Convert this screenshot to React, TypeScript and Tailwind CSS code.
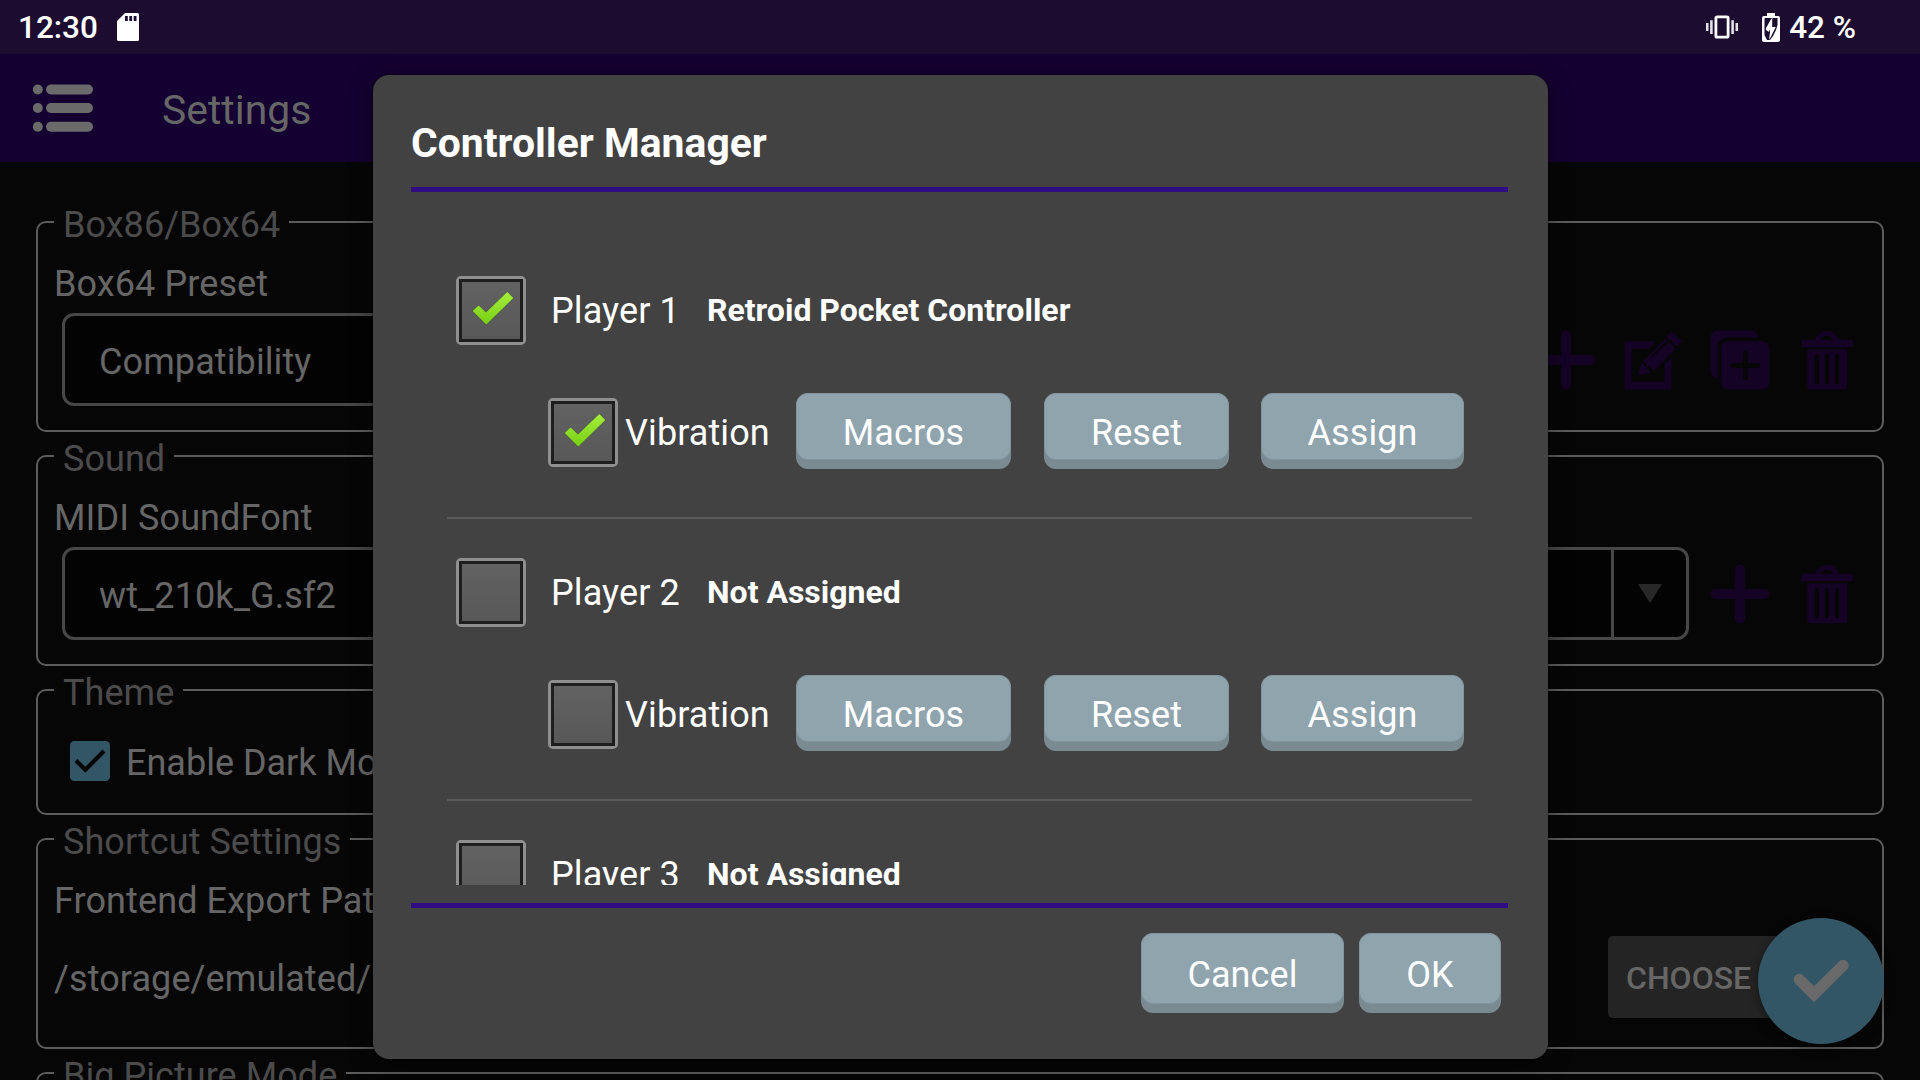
import React from "react";

const SLOT = "#060606";

function MenuIcon() {
  return (
    <svg width="60" height="48" viewBox="0 0 60 48" fill="#6a6a6a">
      {[5.5, 24, 42.8].map((y) => (
        <g key={y}>
          <circle cx="4.8" cy={y} r="5" />
          <rect x="13" y={y - 5} width="47" height="10" rx="5" />
        </g>
      ))}
    </svg>
  );
}

function SdCardIcon() {
  return (
    <svg width="22" height="28" viewBox="0 0 22 28">
      <path fill="#fff" fillRule="evenodd" d="M8 0H20.5Q22 0 22 1.5V26.5Q22 28 20.5 28H1.5Q0 28 0 26.5V8ZM8 3V8H10.8V3ZM12.3 3V8H15.1V3ZM16.7 3V8H19.5V3Z" />
    </svg>
  );
}

function VibrateIcon() {
  return (
    <svg width="32" height="24" viewBox="0 0 32 24" fill="none">
      <rect x="9.9" y="1.9" width="12.2" height="20.2" rx="1.2" stroke="#fff" strokeWidth="2.8" />
      <path d="M1.2 8V16M5.4 5.2V19M26.6 5.2V19M30.8 8V16" stroke="#fff" strokeOpacity=".88" strokeWidth="2.6" />
    </svg>
  );
}

function BatteryIcon() {
  return (
    <svg width="18" height="29" viewBox="0 0 18 29">
      <path fill="#fff" d="M5 0H13V3H16Q18 3 18 5V27Q18 29 16 29H2Q0 29 0 27V5Q0 3 2 3H5Z" />
      <path fill="#1c0c30" d="M3 5H10L8.5 7L4 15V17L7 19V25L8 27H5L2.5 22V6Z M10 5H15.5V12L14 17L11 23L8 27L7 19L10.5 5Z" />
      <path fill="#fff" d="M10.2 6L4.6 17H8V25.5L13.8 14H10.2Z" />
    </svg>
  );
}

function PlusIcon() {
  return (
    <svg width="60" height="60" viewBox="0 0 60 60" fill="#150326">
      <rect x="25" y=".5" width="10" height="59" rx="5" />
      <rect x=".5" y="25" width="59" height="10" rx="5" />
    </svg>
  );
}

function EditIcon() {
  return (
    <svg width="60" height="60" viewBox="0 0 60 60" fill="#150326">
      <path d="M32.5 11.5H1.5V59.5H48.5V27.2L41.5 34.2V51.8H8.5V18.8H25.5Z" />
      <path d="M14.8 45.2L18.8 32.2L27.8 42.6Z" />
      <path d="M20 31.6L42 8.6L52.8 18.8L30.8 41Z" />
      <path d="M48.8 1.3L59 11.3L53.8 16.7L43.3 6.8Z" />
      <path d="M28.6 26.8L44.2 11.8" stroke={SLOT} strokeWidth="1.6" />
    </svg>
  );
}

function DuplicateIcon() {
  return (
    <svg width="60" height="60" viewBox="0 0 60 60" fill="#150326">
      <path d="M7.8 48.8Q.5 47 .5 41V7.5A7 7 0 0 1 7.5 .5H41Q47 .5 48.8 7.5H17.5A9.7 9.7 0 0 0 7.8 17.2Z" />
      <rect x="11.2" y="11.2" width="48.3" height="48.3" rx="7" />
      <path d="M35.5 23V47.8M23.2 35.4H47.4" stroke={SLOT} strokeWidth="5" strokeLinecap="round" />
    </svg>
  );
}

function TrashIcon() {
  return (
    <svg width="60" height="60" viewBox="0 0 60 60" fill="#150326">
      <path d="M18.2 10.5A12 12 0 0 1 41.8 10.5H36.8A7.4 7.4 0 0 0 23.2 10.5Z" />
      <rect x="4.2" y="9.8" width="51.6" height="7.4" rx="1.5" />
      <path d="M10.2 19.5H50.2V57Q50.2 59.3 48 59.3H12.4Q10.2 59.3 10.2 57Z" />
      <path d="M19.9 26V52.2M30 26V52.2M40.1 26V52.2" stroke={SLOT} strokeWidth="4.3" strokeLinecap="round" />
    </svg>
  );
}

function Group({ title, className, children }: { title: string; className: string; children?: React.ReactNode }) {
  return (
    <section className={`relative mb-[23px] shrink-0 rounded-[10px] border-2 border-[#5c5c5c] pr-3 pl-4 ${className}`}>
      <h2 className="absolute -top-[19px] left-4 bg-[#060606] px-[9px] leading-[42px] tracking-[0.05px] text-[#4b4b4b]">{title}</h2>
      {children}
    </section>
  );
}

function SelectRow({ value, children }: { value: string; children: React.ReactNode }) {
  return (
    <div className="mt-2 ml-2 flex items-center">
      <div className="mr-[7px] flex h-[93px] grow rounded-xl border-3 border-[#474747] bg-[#030303]">
        <div className="grow pt-[25px] pl-[34px] leading-[42px]">{value}</div>
        <div className="flex w-[75px] items-center justify-center border-l-3 border-[#474747]">
          <svg width="24" height="19" viewBox="0 0 24 19" fill="#282828">
            <path d="M0 0H24L12 19Z" />
          </svg>
        </div>
      </div>
      {children}
    </div>
  );
}

function IconCell({ children }: { children: React.ReactNode }) {
  return <button className="flex w-[87px] items-center justify-center">{children}</button>;
}

function CheckBox({ checked }: { checked: boolean }) {
  return (
    <span className="flex h-[69px] w-[70px] shrink-0 rounded-[5px] border-3 border-[#8f8f8f]">
      <span className="relative grow border-3 border-[#1e1e1e] bg-linear-to-b from-[#626262] to-[#585858]">
        {checked && (
          <svg className="absolute -top-1.5 -left-1.5" width="70" height="69" viewBox="0 0 70 69">
            <defs>
              <linearGradient id="tick" x1="0" y1="0" x2="0" y2="1">
                <stop offset="0" stopColor="#a6ee3c" />
                <stop offset="1" stopColor="#76cf12" />
              </linearGradient>
            </defs>
            <path
              d="M16.7 35L22.6 29.5L30 36.6L51.3 16.1L57.3 22L30.3 48.6Z"
              fill="url(#tick)"
              stroke="#4c5a3c"
              strokeOpacity=".55"
              strokeWidth="1.5"
              strokeLinejoin="round"
              paintOrder="stroke"
            />
          </svg>
        )}
      </span>
    </span>
  );
}

function RaisedButton({ label, className }: { label: string; className: string }) {
  return (
    <button className={`flex rounded-xl bg-[#7a8a91] pb-[9px] ${className}`}>
      <span className="flex grow items-center justify-center rounded-xl border border-[#82959e] bg-[#90a4ae] pt-[13px] leading-[42px]">
        {label}
      </span>
    </button>
  );
}

function PlayerRow({ name, device, on }: { name: string; device: string; on: boolean }) {
  return (
    <li className="h-[282px] border-b-2 border-[#5b5b5b] pt-[39px]">
      <div className="flex items-center pl-[9px]">
        <CheckBox checked={on} />
        <span className="ml-[25px] w-[156px] leading-[42px]">{name}</span>
        <span className="-mt-0.5 text-[32px] leading-[38px] font-bold tracking-normal">{device}</span>
      </div>
      <div className="mt-12 flex h-[76px] items-center pl-[101px]">
        <span className="mt-[3px] flex">
          <CheckBox checked={on} />
        </span>
        <span className="mt-1 ml-[7px] w-[171px] leading-[42px]">Vibration</span>
        <RaisedButton label="Macros" className="h-[76px] w-[215px]" />
        <RaisedButton label="Reset" className="ml-[33px] h-[76px] w-[185px]" />
        <RaisedButton label="Assign" className="ml-8 h-[76px] w-[203px]" />
      </div>
    </li>
  );
}

const players = [
  { name: "Player 1", device: "Retroid Pocket Controller", on: true },
  { name: "Player 2", device: "Not Assigned", on: false },
  { name: "Player 3", device: "Not Assigned", on: false },
];

export default function App() {
  return (
    <div className="relative flex h-[1080px] w-[1920px] flex-col overflow-hidden bg-[#060606] font-['Roboto',sans-serif] text-[36px] tracking-[0.1px] text-[#666666]">
      <div className="flex h-[54px] shrink-0 items-center bg-[#1c0c30] pr-16 pl-[18px] text-[31.5px] leading-[38px] font-medium tracking-normal text-white">
        <span className="mt-0.5 w-[99px]">12:30</span>
        <SdCardIcon />
        <span className="ml-auto">
          <VibrateIcon />
        </span>
        <span className="ml-6">
          <BatteryIcon />
        </span>
        <span className="mt-0.5 ml-[9px]">42 %</span>
      </div>

      <header className="flex h-[108px] shrink-0 items-center bg-[#140131] pl-[33px]">
        <MenuIcon />
        <h1 className="mt-[3px] ml-[69px] text-[40.9px] leading-[50px] tracking-normal">Settings</h1>
      </header>

      <main className="flex flex-col px-9 pt-[59px]">
        <Group title="Box86/Box64" className="h-[211px] pt-10">
          <div className="leading-[42px]">Box64 Preset</div>
          <SelectRow value="Compatibility">
            <IconCell><PlusIcon /></IconCell>
            <IconCell><EditIcon /></IconCell>
            <IconCell><DuplicateIcon /></IconCell>
            <IconCell><TrashIcon /></IconCell>
          </SelectRow>
        </Group>

        <Group title="Sound" className="h-[211px] pt-10">
          <div className="leading-[42px]">MIDI SoundFont</div>
          <SelectRow value="wt_210k_G.sf2">
            <IconCell><PlusIcon /></IconCell>
            <IconCell><TrashIcon /></IconCell>
          </SelectRow>
        </Group>

        <Group title="Theme" className="h-[126px] pt-[50px]">
          <div className="ml-4 flex items-start">
            <svg width="40" height="40" viewBox="0 0 40 40">
              <rect width="40" height="40" rx="4.5" fill="#325666" />
              <path d="M6 19.5L15.3 28.8L34 10" fill="none" stroke={SLOT} strokeWidth="4.2" />
            </svg>
            <span className="mt-px ml-4 leading-[42px] tracking-normal">Enable Dark Mode</span>
          </div>
        </Group>

        <Group title="Shortcut Settings" className="h-[211px] pt-10">
          <div className="leading-[42px]">Frontend Export Path</div>
          <div className="mt-3.5 flex h-[82px] items-center justify-between">
            <span className="mt-1 leading-[42px]">/storage/emulated/</span>
            <button className="mr-[72px] h-[82px] w-[190px] rounded-[5px] bg-[#242424] pt-0.5 pl-[18px] text-left text-[32px] leading-[38px] font-medium tracking-normal">
              CHOOSE
            </button>
          </div>
        </Group>

        <Group title="Big Picture Mode" className="h-[211px]" />
      </main>

      <button className="absolute top-[918px] left-[1758px] size-[126px] rounded-full bg-[#325666] shadow-[0_4px_12px_rgba(0,0,0,0.4)]">
        <svg width="126" height="126" viewBox="0 0 126 126" fill="none">
          <path d="M41.3 61.5L56 76.2L85 47.4" stroke="#696969" strokeWidth="11.3" strokeLinecap="round" />
        </svg>
      </button>

      <div className="absolute inset-x-0 top-[54px] bottom-0 flex items-center justify-center pl-px text-white">
        <div className="flex h-[984px] w-[1175px] flex-col rounded-2xl bg-[#424242] px-[38px] pt-[43px] shadow-[0_0_2px_rgba(0,0,0,0.8),0_6px_24px_rgba(0,0,0,0.4)]">
          <h2 className="text-[40.9px] leading-[50px] font-bold tracking-normal">Controller Manager</h2>
          <div className="mt-[19px] h-[5px] w-[1097px] shrink-0 bg-[#2f0c82]" />
          <ul className="h-[693px] shrink-0 overflow-hidden pt-[45px] pr-[38px] pl-9">
            {players.map((p) => (
              <PlayerRow key={p.name} {...p} />
            ))}
          </ul>
          <div className="mt-[18px] h-[5px] w-[1097px] shrink-0 bg-[#2f0c82]" />
          <div className="mt-[25px] flex justify-end gap-[15px] pr-[9px]">
            <RaisedButton label="Cancel" className="h-20 w-[203px]" />
            <RaisedButton label="OK" className="h-20 w-[142px]" />
          </div>
        </div>
      </div>
    </div>
  );
}
